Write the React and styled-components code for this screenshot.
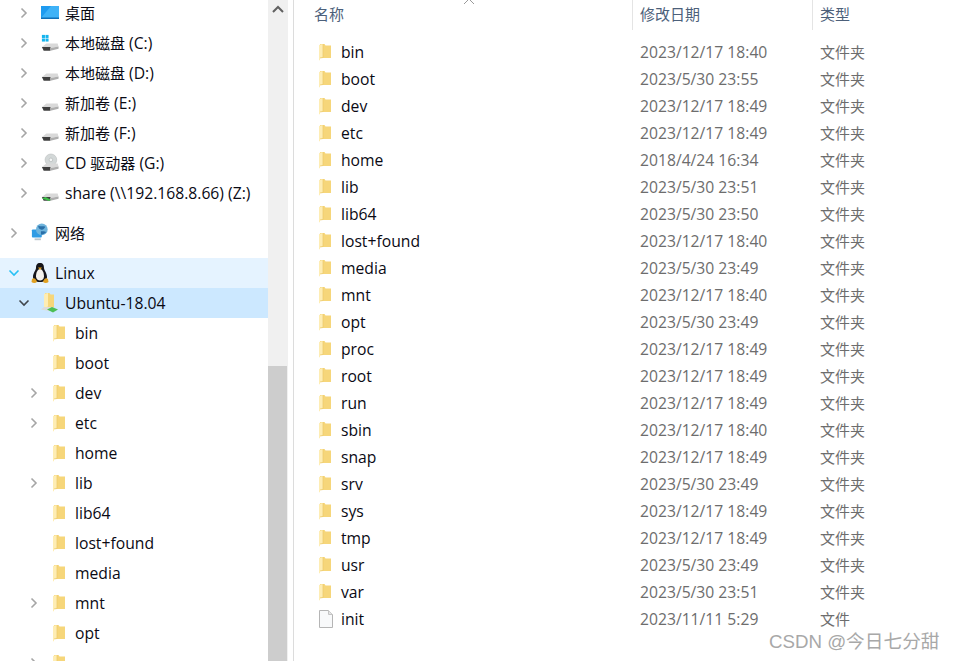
import styled, { createGlobalStyle } from "styled-components";

const GlobalStyle = createGlobalStyle`
  html, body {
    margin: 0;
    padding: 0;
    background: #fff;
    overflow: hidden;
  }
  body {
    font-family: "Open Sans", "Noto Sans CJK SC", sans-serif;
  }
`;

const Window = styled.div`
  position: relative;
  display: flex;
  width: 955px;
  height: 661px;
  overflow: hidden;
  background: #fff;
`;

const TreePane = styled.div`
  width: 268px;
  flex: none;
  overflow: hidden;
`;

const TreeInner = styled.div`
  margin-top: -2px;
`;

const TreeGroup = styled.div`
  margin-bottom: 10px;
`;

const TreeRow = styled.div`
  display: flex;
  align-items: center;
  height: 30px;
  padding-left: ${(p) => p.$level * 10 + 8}px;
  background: ${(p) => p.$bg || "transparent"};
  font-size: 15.7px;
  color: #0a0a14;
  white-space: pre;
`;

const Toggle = styled.span`
  display: flex;
  justify-content: center;
  width: 12px;
  flex: none;
  margin-right: 11px;
`;

const TreeIcon = styled.span`
  display: flex;
  justify-content: ${(p) => (p.$narrow ? "flex-start" : "center")};
  padding-left: ${(p) => (p.$narrow ? 2 : 0)}px;
  width: ${(p) => (p.$narrow ? 16 : 18)}px;
  flex: none;
  margin-right: 6px;
`;

const Cjk = styled.span`
  font-size: 15px;
`;

const Scrollbar = styled.div`
  display: flex;
  flex-direction: column;
  width: 20px;
  flex: none;
  background: #f0f0f0;
`;

const ScrollArrow = styled.div`
  display: flex;
  justify-content: center;
  padding-top: 5px;
  height: 366px;
  box-sizing: border-box;
`;

const ScrollThumb = styled.div`
  flex: 1;
  margin-right: 1px;
  background: #cdcdcd;
`;

const ListPane = styled.div`
  position: relative;
  flex: 1;
  margin-left: 5px;
  border-left: 1px solid #dcdcdc;
`;

const SortMark = styled.svg`
  position: absolute;
  left: 169px;
  top: -3px;
`;

const Header = styled.div`
  display: flex;
  height: 30px;
  font-size: 15px;
  color: #4c607a;
`;

const HeaderCell = styled.div`
  width: ${(p) => p.$w}px;
  box-sizing: border-box;
  padding-left: ${(p) => p.$pad}px;
  padding-top: 4px;
  line-height: 20px;
  border-right: ${(p) => (p.$line ? "1px solid #e4e4e4" : "none")};
`;

const Rows = styled.div`
  margin-top: 8px;
`;

const Row = styled.div`
  display: flex;
  align-items: center;
  height: 27px;
  font-size: 15.7px;
`;

const NameCell = styled.div`
  display: flex;
  align-items: center;
  width: 346px;
  padding-left: 25px;
  box-sizing: border-box;
  color: #0a0a14;
`;

const FileIcon = styled.span`
  display: flex;
  width: 22px;
  flex: none;
`;

const DateCell = styled.div`
  width: 180px;
  font-size: 15.7px;
  color: #6d6d6d;
`;

const TypeCell = styled.div`
  font-size: 15px;
  line-height: 20px;
  color: #6d6d6d;
`;

const Watermark = styled.div`
  position: absolute;
  left: 769px;
  top: 630px;
  font-family: "Liberation Sans", "Noto Sans CJK SC", sans-serif;
  font-size: 18.7px;
  line-height: 24px;
  color: #a8a8a8;
  white-space: nowrap;
`;

function Chevron({ open, color }) {
  const stroke = color || (open ? "#40464d" : "#a6a6a6");
  return (
    <svg width="12" height="12" viewBox="0 0 12 12" fill="none">
      <path
        d={open ? "M1.500 3.500 6 8l4.500-4.500" : "M3.500 1.500 8 6l-4.500 4.500"}
        stroke={stroke}
        strokeWidth="1.6"
      />
    </svg>
  );
}

function Folder() {
  return (
    <svg width="12" height="18" viewBox="0 0 12 18">
      <path d="M1 1h4.500l1 1.500H12V15H1z" fill="#f6d67a" />
      <path d="M0 2 4 1v13.500L1 15v2l-1 .5z" fill="#feedb4" />
      <path d="M4 1v13.500L1 15" fill="none" stroke="#ecc869" strokeWidth=".7" />
    </svg>
  );
}

function PlainFile() {
  return (
    <svg width="14" height="18" viewBox="0 0 14 18">
      <path d="M.5.5h9l4 4v13H.5z" fill="#f8f9fa" stroke="#b5b5b5" />
      <path d="M9.500.5v4h4" fill="#e4e4e4" stroke="#c4c4c4" />
    </svg>
  );
}

function DesktopIcon() {
  return (
    <svg width="18" height="14" viewBox="0 0 18 14">
      <rect width="18" height="12.500" fill="#1e9bf0" />
      <path d="M0 12 10 0h8v12.500H0z" fill="#3fb2f7" />
      <rect y="11.500" width="18" height="1.500" fill="#0f6fb8" />
    </svg>
  );
}

function Drive({ win, cd, net }) {
  return (
    <svg width="20" height="20" viewBox="0 0 20 20">
      {cd && (
        <g>
          <circle cx="11" cy="6.500" r="6.500" fill="#d3d8d8" stroke="#b4b9b9" strokeWidth=".6" />
          <circle cx="11" cy="6.500" r="2" fill="#f4f6f6" stroke="#a8adad" strokeWidth=".6" />
        </g>
      )}
      <path d="M1 14.500 6 10.500h12.500l1 3.500-9 1.500z" fill="#d9d9d9" />
      <path d="M1 14.500h9.500V18.500H3z" fill="#3f3f3f" />
      <path d="M10.500 15.500 19.500 14v2.500l-9 2z" fill="#aeaeae" />
      {win && (
        <g fill="#14b4ee">
          <rect x="1" y="1" width="3.400" height="3.400" />
          <rect x="5" y="1" width="3.400" height="3.400" />
          <rect x="1" y="5" width="3.400" height="3.400" />
          <rect x="5" y="5" width="3.400" height="3.400" />
        </g>
      )}
      {net && <path d="M1 16 5 14.500l6 3-2 1.500z" fill="#3fc24a" />}
    </svg>
  );
}

function Globe() {
  return (
    <svg width="20" height="22" viewBox="0 0 20 22">
      <rect x="1" y="7" width="11" height="9" rx="1" fill="#2f9be4" />
      <circle cx="12" cy="7" r="6.500" fill="#6fb4dc" />
      <path d="M8 3c3 1 6 0 8 1-1 2-3 4-5 3-2 0-3-2-3-4zm3 6c2 0 5 0 6 1-2 2-4 3-6 3z" fill="#2a6fa8" />
      <rect x="4" y="17" width="7" height="2" fill="#b9c4cc" />
    </svg>
  );
}

function Penguin() {
  return (
    <svg width="18" height="21" viewBox="0 0 18 21">
      <path d="M9 0c3 0 4 2 4 5 0 2 3 5 3 9 0 3-3 5-7 5s-7-2-7-5c0-4 3-7 3-9 0-3 1-5 4-5z" fill="#15151a" />
      <path d="M9 6c2.500 0 4 4 4 7.500 0 2.500-2 4-4 4s-4-1.500-4-4C5 10 6.500 6 9 6z" fill="#f4f2ec" />
      <path d="M7 4.500h4L9 7z" fill="#e0a021" />
      <path d="M1 16c2-1.500 4-.5 5 3-2 1.500-4 1-5.500 0zM17 16c-2-1.500-4-.5-5 3 2 1.500 4 1 5.500 0z" fill="#e0a021" />
    </svg>
  );
}

function DistroFolder() {
  return (
    <svg width="18" height="20" viewBox="0 0 18 20">
      <path d="M4 0h4.500l1 1.500H13V14H4z" fill="#f6d67a" />
      <path d="M3 1 7 0v13.500L3 15z" fill="#feedb4" />
      <path d="M0 16.500 3 14h10l2 2.500-7 1.500z" fill="#dcdcdc" />
      <path d="M6 16.500l5-2.500 6 2.500-5 3z" fill="#4cbf55" />
    </svg>
  );
}

// CJK runs stay at 15px, latin is set a little larger to get the reference widths
const label = (text) =>
  text.split(/([\u4e00-\u9fff]+)/).map((part, i) =>
    i % 2 ? <Cjk key={i}>{part}</Cjk> : part
  );

const drives = [
  { name: "本地磁盘 (C:)", win: true },
  { name: "本地磁盘 (D:)" },
  { name: "新加卷 (E:)" },
  { name: "新加卷 (F:)" },
  { name: "CD 驱动器 (G:)", cd: true },
  { name: "share (\\\\192.168.8.66) (Z:)", net: true },
];

const treeFolders = [
  ["bin"],
  ["boot"],
  ["dev", true],
  ["etc", true],
  ["home"],
  ["lib", true],
  ["lib64"],
  ["lost+found"],
  ["media"],
  ["mnt", true],
  ["opt"],
  ["", true],
];

const files = [
  ["bin", "2023/12/17 18:40"],
  ["boot", "2023/5/30 23:55"],
  ["dev", "2023/12/17 18:49"],
  ["etc", "2023/12/17 18:49"],
  ["home", "2018/4/24 16:34"],
  ["lib", "2023/5/30 23:51"],
  ["lib64", "2023/5/30 23:50"],
  ["lost+found", "2023/12/17 18:40"],
  ["media", "2023/5/30 23:49"],
  ["mnt", "2023/12/17 18:40"],
  ["opt", "2023/5/30 23:49"],
  ["proc", "2023/12/17 18:49"],
  ["root", "2023/12/17 18:49"],
  ["run", "2023/12/17 18:49"],
  ["sbin", "2023/12/17 18:40"],
  ["snap", "2023/12/17 18:49"],
  ["srv", "2023/5/30 23:49"],
  ["sys", "2023/12/17 18:49"],
  ["tmp", "2023/12/17 18:49"],
  ["usr", "2023/5/30 23:49"],
  ["var", "2023/5/30 23:51"],
];

export default function App() {
  return (
    <Window>
      <GlobalStyle />
      <TreePane>
        <TreeInner>
          <TreeGroup>
            <TreeRow $level={1}>
              <Toggle><Chevron /></Toggle>
              <TreeIcon><DesktopIcon /></TreeIcon>
              <span>{label("桌面")}</span>
            </TreeRow>
            {drives.map((d) => (
              <TreeRow $level={1} key={d.name}>
                <Toggle><Chevron /></Toggle>
                <TreeIcon><Drive win={d.win} cd={d.cd} net={d.net} /></TreeIcon>
                <span>{label(d.name)}</span>
              </TreeRow>
            ))}
          </TreeGroup>
          <TreeGroup>
            <TreeRow $level={0}>
              <Toggle><Chevron /></Toggle>
              <TreeIcon><Globe /></TreeIcon>
              <span>{label("网络")}</span>
            </TreeRow>
          </TreeGroup>
          <TreeRow $level={0} $bg="#e5f3ff">
            <Toggle><Chevron open color="#26c0f5" /></Toggle>
            <TreeIcon><Penguin /></TreeIcon>
            Linux
          </TreeRow>
          <TreeRow $level={1} $bg="#cce8ff">
            <Toggle><Chevron open /></Toggle>
            <TreeIcon><DistroFolder /></TreeIcon>
            Ubuntu-18.04
          </TreeRow>
          {treeFolders.map(([name, more], i) => (
            <TreeRow $level={2} key={i}>
              <Toggle>{more && <Chevron />}</Toggle>
              <TreeIcon $narrow><Folder /></TreeIcon>
              {name}
            </TreeRow>
          ))}
        </TreeInner>
      </TreePane>
      <Scrollbar>
        <ScrollArrow>
          <svg width="12" height="8" viewBox="0 0 12 8" fill="none">
            <path d="M1 7l5-5 5 5" stroke="#606060" strokeWidth="2" />
          </svg>
        </ScrollArrow>
        <ScrollThumb />
      </Scrollbar>
      <ListPane>
        <SortMark width="12" height="8" viewBox="0 0 12 8" fill="none">
          <path d="M1 7l5-5 5 5" stroke="#9a9a9a" />
        </SortMark>
        <Header>
          <HeaderCell $w={339} $pad={20} $line>名称</HeaderCell>
          <HeaderCell $w={180} $pad={7} $line>修改日期</HeaderCell>
          <HeaderCell $w={120} $pad={7}>类型</HeaderCell>
        </Header>
        <Rows>
          {files.map(([name, date]) => (
            <Row key={name}>
              <NameCell>
                <FileIcon><Folder /></FileIcon>
                {name}
              </NameCell>
              <DateCell>{date}</DateCell>
              <TypeCell>文件夹</TypeCell>
            </Row>
          ))}
          <Row>
            <NameCell>
              <FileIcon><PlainFile /></FileIcon>
              init
            </NameCell>
            <DateCell>2023/11/11 5:29</DateCell>
            <TypeCell>文件</TypeCell>
          </Row>
        </Rows>
      </ListPane>
      <Watermark>CSDN @今日七分甜</Watermark>
    </Window>
  );
}
